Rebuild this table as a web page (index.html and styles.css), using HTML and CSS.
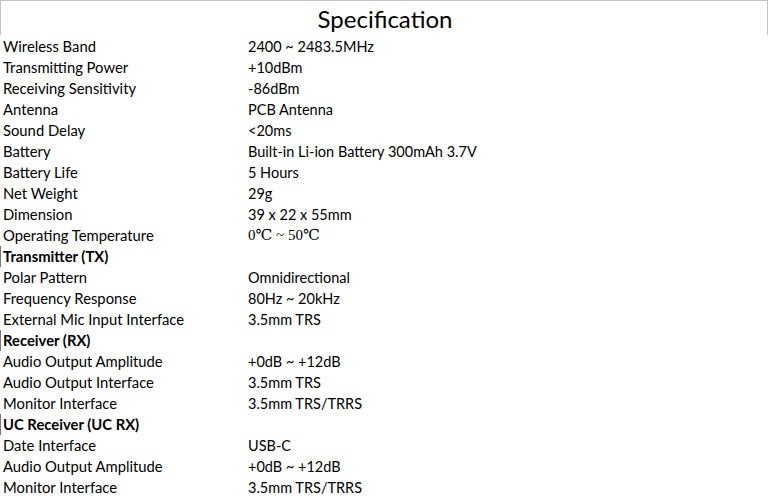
FILE: index.html
```html
<!DOCTYPE html>
<html>
<head>
<meta charset="utf-8">
<link rel="stylesheet" href="styles.css">
</head>
<body>
<div class="sheet">
  <div class="title">Specification</div>
  <div class="specs">
    <div class="k">Wireless Band</div><div class="v">2400 ~ 2483.5MHz</div>
    <div class="k">Transmitting Power</div><div class="v">+10dBm</div>
    <div class="k">Receiving Sensitivity</div><div class="v">-86dBm</div>
    <div class="k">Antenna</div><div class="v">PCB Antenna</div>
    <div class="k">Sound Delay</div><div class="v">&lt;20ms</div>
    <div class="k">Battery</div><div class="v">Built-in Li-ion Battery 300mAh 3.7V</div>
    <div class="k">Battery Life</div><div class="v">5 Hours</div>
    <div class="k">Net Weight</div><div class="v">29g</div>
    <div class="k">Dimension</div><div class="v">39 x 22 x 55mm</div>
    <div class="k">Operating Temperature</div><div class="v serif">0℃ ~ 50℃</div>
    <div class="k section">Transmitter (TX)</div><div class="v"></div>
    <div class="k">Polar Pattern</div><div class="v">Omnidirectional</div>
    <div class="k">Frequency Response</div><div class="v">80Hz ~ 20kHz</div>
    <div class="k">External Mic Input Interface</div><div class="v">3.5mm TRS</div>
    <div class="k section">Receiver (RX)</div><div class="v"></div>
    <div class="k">Audio Output Amplitude</div><div class="v">+0dB ~ +12dB</div>
    <div class="k">Audio Output Interface</div><div class="v">3.5mm TRS</div>
    <div class="k">Monitor Interface</div><div class="v">3.5mm TRS/TRRS</div>
    <div class="k section">UC Receiver (UC RX)</div><div class="v"></div>
    <div class="k">Date Interface</div><div class="v">USB-C</div>
    <div class="k">Audio Output Amplitude</div><div class="v">+0dB ~ +12dB</div>
    <div class="k">Monitor Interface</div><div class="v">3.5mm TRS/TRRS</div>
  </div>
</div>
</body>
</html>
```

FILE: styles.css
```css
html, body {
  margin: 0;
  padding: 0;
  background: #ffffff;
}
body {
  font-family: Lato, "Open Sans", sans-serif;
  color: #000000;
  overflow: hidden;
}
.sheet {
  width: 768px;
}
.title {
  box-sizing: border-box;
  width: 768px;
  height: 35px;
  border: 1px solid #c4c4c4;
  border-bottom: none;
  text-align: center;
  font-size: 24px;
  line-height: 36px;
  padding-left: 2px;
  margin-bottom: 1px;
}
.specs {
  display: grid;
  grid-template-columns: 248px 1fr;
  grid-auto-rows: 21px;
}
.k, .v {
  font-size: 14.8px;
  line-height: 21px;
  white-space: nowrap;
}
.v {
  font-size: 14.5px;
}
.k {
  padding-left: 3px;
}
.section {
  font-weight: bold;
  border-left: 1px solid #777777;
  padding-left: 2px;
}
.serif {
  font-family: "Liberation Serif", "DejaVu Serif", serif;
  font-size: 15px;
}
```
